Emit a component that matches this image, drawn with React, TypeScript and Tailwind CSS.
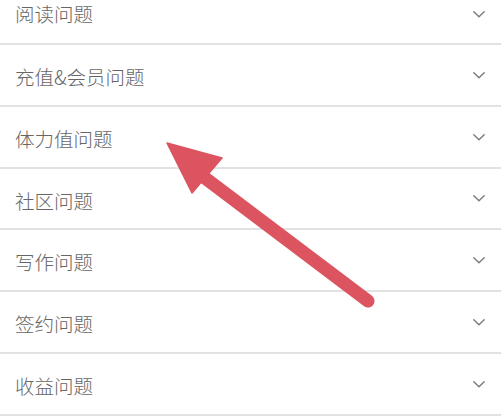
import React from "react";

const items = ["阅读问题", "充值&会员问题", "体力值问题", "社区问题", "写作问题", "签约问题", "收益问题"];

function Chevron() {
  return (
    <svg width="14" height="9" viewBox="0 0 14 9" className="shrink-0">
      <path d="M1.8 1.8 L7 6.8 L12.2 1.8" fill="none" stroke="#7a7a7a" strokeWidth="1.4" strokeLinecap="round" strokeLinejoin="round" />
    </svg>
  );
}

export default function App() {
  return (
    <div className="relative w-[501px] h-[416px] overflow-hidden bg-white" style={{ fontFamily: '"Noto Sans CJK SC", "Noto Sans", sans-serif' }}>
      <div className="flex flex-col">
        {items.map((t, i) => (
          <div
            key={t}
            className={`flex items-center justify-between pl-[15px] pr-[15px] border-b-2 border-[#e2e2e2] ${i === 0 ? "h-[45px] pt-[0px]" : "h-[61.75px] pt-[4px]"}`}
          >
            <span className={`text-[19.5px] font-light text-[#666666] leading-none ${i === 0 ? "-mt-[16px]" : ""}`}>{t}</span>
            <span className={i === 0 ? "-mt-[15px]" : "-mt-[3px]"}>
              <Chevron />
            </span>
          </div>
        ))}
      </div>
      <svg className="absolute left-0 top-0 pointer-events-none" width="501" height="416" viewBox="0 0 501 416">
        <line x1="368" y1="301" x2="205" y2="178" stroke="#dc5460" strokeWidth="13" strokeLinecap="round" />
        <polygon points="167,143 222,158 192,193" fill="#dc5460" stroke="#dc5460" strokeWidth="1.5" strokeLinejoin="round" />
      </svg>
    </div>
  );
}
